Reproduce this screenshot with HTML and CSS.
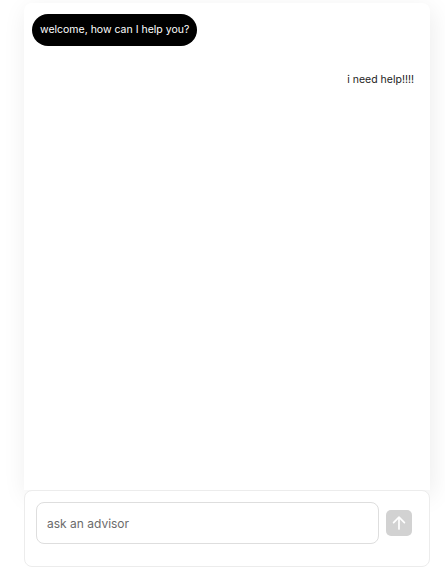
FILE: index.html
```html
<!DOCTYPE html>
<html lang="en">
<head>
<meta charset="utf-8">
<title>Advisor chat</title>
<link rel="stylesheet" href="styles.css">
</head>
<body>
<div class="app">
  <div class="messages">
    <div class="msg msg-bot">welcome, how can I help you?</div>
    <div class="msg msg-user">i need help!!!!</div>
  </div>
  <div class="composer">
    <div class="input">ask an advisor</div>
    <button class="send" type="button" aria-label="send">
      <svg width="18" height="18" viewBox="0 0 18 18" fill="none" stroke="#fff" stroke-width="1.7" stroke-linecap="round" stroke-linejoin="round"><path d="M9 15V3.2M3.6 8.6L9 3.2l5.4 5.4"/></svg>
    </button>
  </div>
</div>
</body>
</html>
```

FILE: styles.css
```css
html, body {
  margin: 0;
  padding: 0;
  background: #ffffff;
}
body {
  font-family: Inter, "Liberation Sans", sans-serif;
  color: #1a1a1a;
}
.app {
  margin: 3px 0 0 24px;
  width: 406px;
  height: 564px;
  display: flex;
  flex-direction: column;
}
.messages {
  flex: 1;
  background: #fff;
  border-radius: 8px 8px 0 0;
  box-shadow: 2px 6px 24px rgba(0, 0, 0, 0.08);
  padding: 11px 8px;
  display: flex;
  flex-direction: column;
  gap: 18px;
}
.msg {
  font-size: 10.5px;
  line-height: 16px;
  padding: 8px 8px;
  border-radius: 16px;
  max-width: 80%;
}
.msg-bot {
  align-self: flex-start;
  background: #000;
  color: #fff;
}
.msg-user {
  align-self: flex-end;
  color: #222;
}
.composer {
  height: 77px;
  box-sizing: border-box;
  background: #fff;
  border: 1px solid #ececec;
  border-radius: 8px;
  display: flex;
  align-items: center;
  gap: 7px;
  padding: 11px 17px 22px 11px;
}
.input {
  flex: 1;
  height: 42px;
  box-sizing: border-box;
  border: 1px solid #dedede;
  border-radius: 8px;
  display: flex;
  align-items: center;
  padding: 0 10px;
  font-size: 12px;
  color: #6b6b6b;
}
.send {
  width: 26px;
  height: 26px;
  border: 0;
  border-radius: 5px;
  background: #d2d2d2;
  display: flex;
  align-items: center;
  justify-content: center;
  padding: 0;
}
```
